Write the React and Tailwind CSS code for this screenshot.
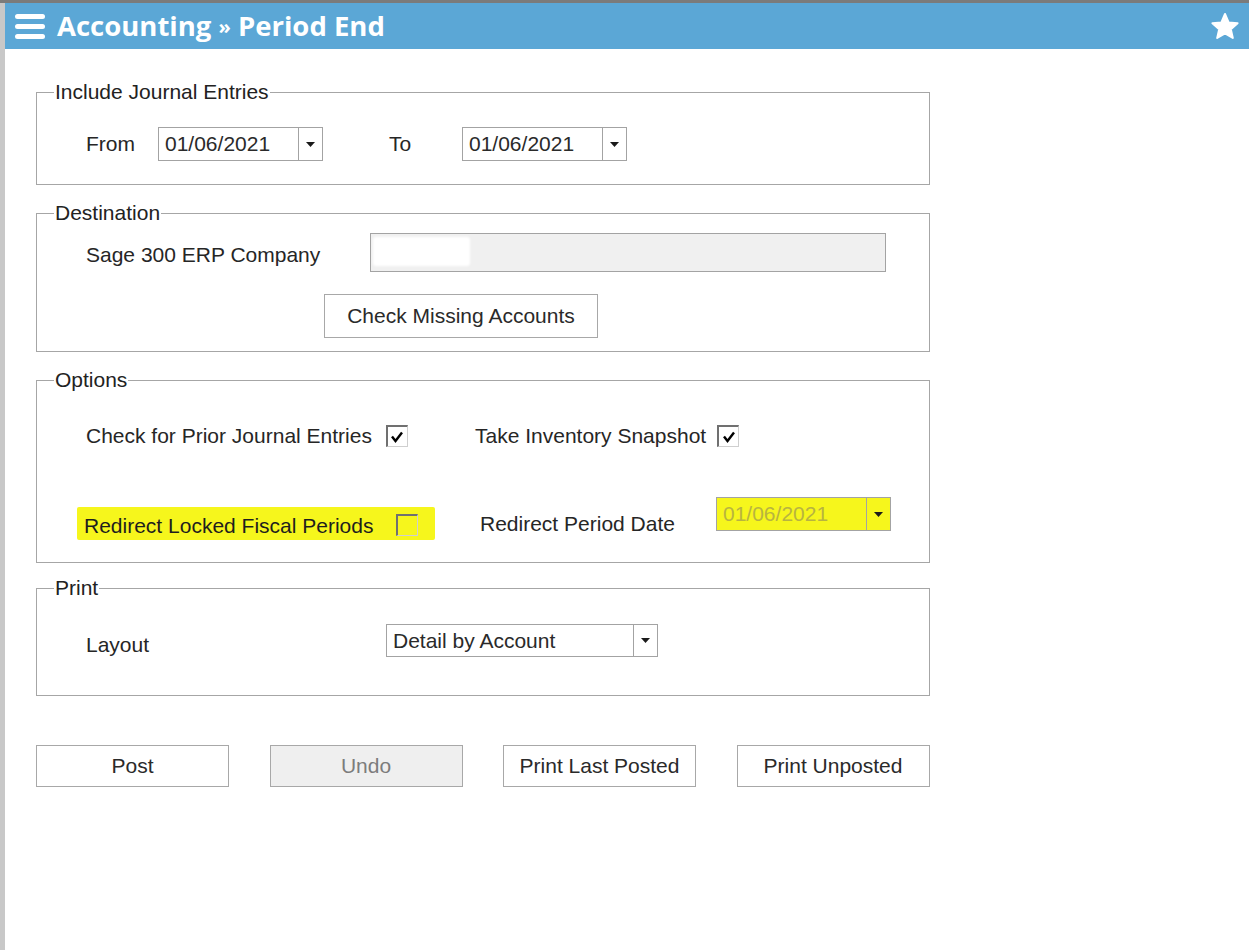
import React from "react";

const sans = "font-['Liberation_Sans',Arial,sans-serif]";

function Caret() {
  return (
    <svg width="9" height="5" viewBox="0 0 9 5">
      <path d="M0 0 L9 0 L4.5 5 Z" fill="#1a1a1a" />
    </svg>
  );
}

function Combo({ value, width, height = 34, yellow = false }) {
  return (
    <div
      className={`flex border border-[#a3a3a3] ${yellow ? "bg-[#f6f61c]" : "bg-white"}`}
      style={{ width, height }}
    >
      <div
        className={`flex-1 flex items-center pl-[6px] ${
          yellow ? "text-[#b8b440]" : "text-[#2a2a2a]"
        }`}
      >
        {value}
      </div>
      <div className="w-[24px] border-l border-[#a3a3a3] flex items-center justify-center">
        <Caret />
      </div>
    </div>
  );
}

function Check({ checked }) {
  return (
    <div className="w-[22px] h-[22px] border-t-2 border-l-2 border-t-[#707070] border-l-[#707070] border-b border-r border-b-[#cfcfcf] border-r-[#cfcfcf] flex items-center justify-center">
      {checked && (
        <svg width="14" height="14" viewBox="0 0 14 14">
          <path d="M2 6.5 L5.5 11 L12 2.5" fill="none" stroke="#000" strokeWidth="2.4" />
        </svg>
      )}
    </div>
  );
}

function Group({ title, className = "", children }) {
  return (
    <fieldset className={`border border-[#a6a6a6] w-[894px] ${className}`}>
      <legend className="ml-[17px] px-[1px] leading-[24px] text-[#222]">{title}</legend>
      <div className="pl-[49px]">{children}</div>
    </fieldset>
  );
}

function Btn({ children, disabled = false, className = "" }) {
  return (
    <div
      className={`flex items-center justify-center border border-[#a8a8a8] ${
        disabled ? "bg-[#efefef] text-[#7c7c7c]" : "bg-white text-[#2a2a2a]"
      } ${className}`}
    >
      {children}
    </div>
  );
}

export default function App() {
  return (
    <div className={`w-[1249px] h-[950px] overflow-hidden bg-white flex flex-col ${sans} text-[21px] text-[#262626]`}>
      <div className="h-[3px] bg-[#7b7b7b]" />
      <div className="flex flex-1">
        <div className="w-[5px] bg-[#c8c8c8]" />
        <div className="flex-1 flex flex-col">
          {/* title bar */}
          <div className="h-[46px] bg-[#5ba7d6] flex items-center pl-[10px] pr-[9px]">
            <svg width="30" height="26" viewBox="0 0 30 26" className="mt-[1px]">
              <rect x="0" y="0" width="30" height="5" rx="2.5" fill="#fff" />
              <rect x="0" y="10" width="30" height="5" rx="2.5" fill="#fff" />
              <rect x="0" y="20" width="30" height="5" rx="2.5" fill="#fff" />
            </svg>
            <div className="ml-[12px] font-['Open_Sans',sans-serif] font-bold text-[27.5px] text-white leading-none">
              Accounting <span className="text-[20px] align-[2px]">»</span> Period End
            </div>
            <div className="flex-1" />
            <svg width="30" height="29" viewBox="0 0 30 29">
              <path
                d="M15 2 L18.6 10.4 L27.6 11.2 L20.8 17.2 L22.8 26 L15 21.4 L7.2 26 L9.2 17.2 L2.4 11.2 L11.4 10.4 Z"
                fill="#fff"
                stroke="#fff"
                strokeWidth="2"
                strokeLinejoin="round"
              />
            </svg>
          </div>

          {/* form body */}
          <div className="pl-[31px] pt-[31px] flex flex-col">
            <Group title="Include Journal Entries" className="pt-[23px] pb-[23px]">
              <div className="flex items-center h-[34px]">
                <div className="w-[72px]">From</div>
                <Combo value="01/06/2021" width={165} />
                <div className="w-[66px]" />
                <div className="w-[73px]">To</div>
                <Combo value="01/06/2021" width={165} />
              </div>
            </Group>

            <Group title="Destination" className="mt-[16px] pt-[8px] pb-[13px]">
              <div className="flex items-center h-[39px]">
                <div className="w-[284px] pt-[4px]">Sage 300 ERP Company</div>
                <div className="w-[516px] h-[39px] bg-[#f0f0f0] border border-[#a3a3a3] pl-[2px] pt-[3px]">
                  <div className="w-[97px] h-[29px] bg-white rounded-[3px] blur-[1px]" />
                </div>
              </div>
              <div className="mt-[22px] ml-[238px]">
                <Btn className="w-[274px] h-[44px]">Check Missing Accounts</Btn>
              </div>
            </Group>

            <Group title="Options" className="mt-[16px] pt-[33px] pb-[22px]">
              <div className="flex items-center h-[22px]">
                <div className="w-[389px] flex items-center">
                  <div>Check for Prior Journal Entries</div>
                  <div className="ml-[14px]">
                    <Check checked />
                  </div>
                </div>
                <div className="flex items-center">
                  <div>Take Inventory Snapshot</div>
                  <div className="ml-[11px]">
                    <Check checked />
                  </div>
                </div>
              </div>
              <div className="flex items-start mt-[50px] h-[43px]">
                <div className="w-[389px]">
                  <div className="ml-[-9px] mt-[10px] w-[358px] h-[33px] bg-[#f6f61c] rounded-[2px] flex items-center pl-[7px]">
                    <div className="pt-[4px] text-[#1e1e1e]">Redirect Locked Fiscal Periods</div>
                    <div className="ml-[23px] mt-[3px]">
                      <Check />
                    </div>
                  </div>
                </div>
                <div className="ml-[5px] w-[236px] mt-[15px] leading-[24px]">Redirect Period Date</div>
                <Combo value="01/06/2021" width={175} yellow />
              </div>
            </Group>

            <Group title="Print" className="mt-[13px] pt-[24px] pb-[38px]">
              <div className="flex items-center h-[33px]">
                <div className="w-[300px] pt-[9px]">Layout</div>
                <Combo value="Detail by Account" width={272} height={33} />
              </div>
            </Group>

            <div className="flex gap-[40.5px] mt-[49px]">
              <Btn className="w-[193px] h-[42px]">Post</Btn>
              <Btn className="w-[193px] h-[42px]" disabled>
                Undo
              </Btn>
              <Btn className="w-[193px] h-[42px]">Print Last Posted</Btn>
              <Btn className="w-[193px] h-[42px]">Print Unposted</Btn>
            </div>
          </div>
        </div>
      </div>
    </div>
  );
}
